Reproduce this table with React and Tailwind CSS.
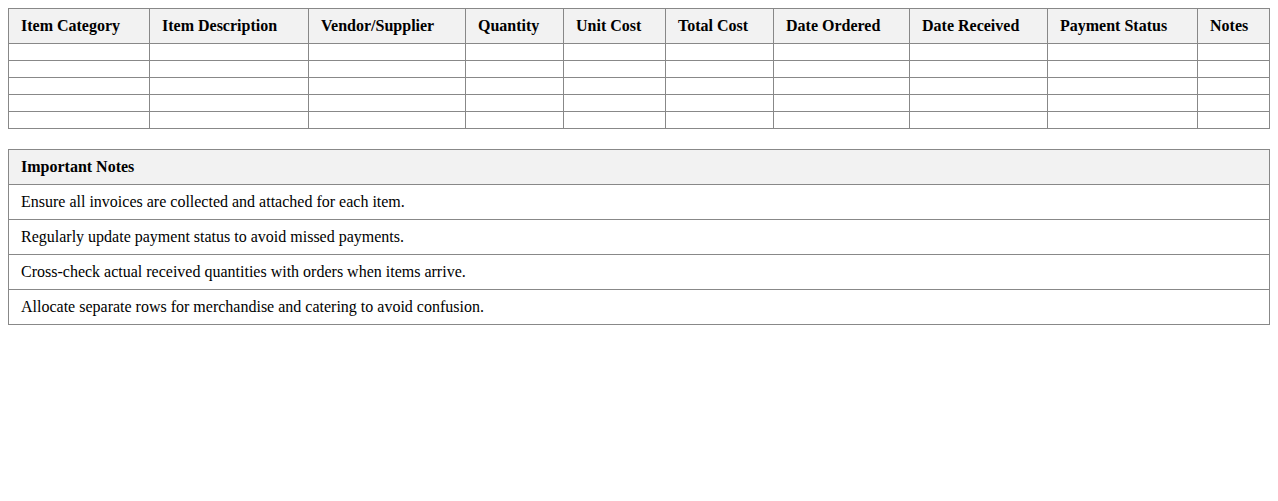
const columns = [
  { label: "Item Category", w: "w-[141px]" },
  { label: "Item Description", w: "w-[159px]" },
  { label: "Vendor/Supplier", w: "w-[157px]" },
  { label: "Quantity", w: "w-[98px]" },
  { label: "Unit Cost", w: "w-[102px]" },
  { label: "Total Cost", w: "w-[108px]" },
  { label: "Date Ordered", w: "w-[136px]" },
  { label: "Date Received", w: "w-[138px]" },
  { label: "Payment Status", w: "w-[150px]" },
  { label: "Notes", w: "w-[72px]" },
];

const notes = [
  "Ensure all invoices are collected and attached for each item.",
  "Regularly update payment status to avoid missed payments.",
  "Cross-check actual received quantities with orders when items arrive.",
  "Allocate separate rows for merchandise and catering to avoid confusion.",
];

export default function App() {
  return (
    <div className="m-2 text-black text-[16px] font-['Liberation_Serif',serif]">
      <table className="w-full border-collapse table-fixed">
        <thead>
          <tr className="bg-[#f2f2f2]">
            {columns.map((c) => (
              <th
                key={c.label}
                className={`${c.w} border border-[#888] px-3 py-2 text-left font-bold leading-[18px]`}
              >
                {c.label}
              </th>
            ))}
          </tr>
        </thead>
        <tbody>
          {[0, 1, 2, 3, 4].map((r) => (
            <tr key={r}>
              {columns.map((c) => (
                <td key={c.label} className="border border-[#888] px-3 py-2"></td>
              ))}
            </tr>
          ))}
        </tbody>
      </table>

      <table className="w-full border-collapse mt-5">
        <thead>
          <tr className="bg-[#f2f2f2]">
            <th className="border border-[#888] px-3 py-2 text-left font-bold leading-[18px]">
              Important Notes
            </th>
          </tr>
        </thead>
        <tbody>
          {notes.map((n) => (
            <tr key={n}>
              <td className="border border-[#888] px-3 py-2 leading-[18px]">{n}</td>
            </tr>
          ))}
        </tbody>
      </table>
    </div>
  );
}
